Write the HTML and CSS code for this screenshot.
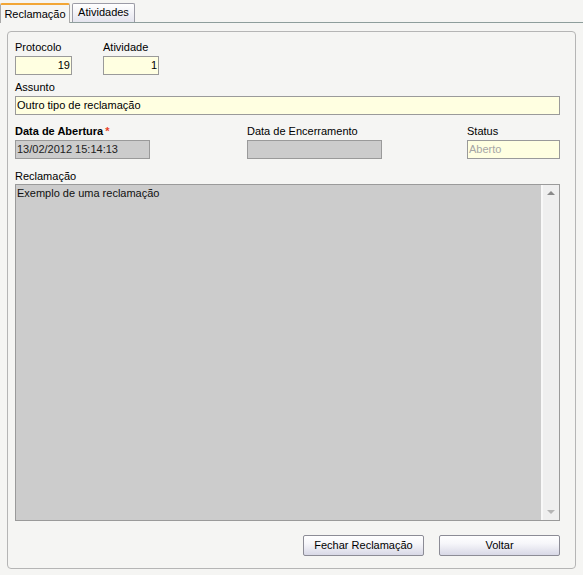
FILE: index.html
```html
<!DOCTYPE html>
<html lang="pt">
<head>
<meta charset="utf-8">
<title>Reclamação</title>
<link rel="stylesheet" href="styles.css">
</head>
<body>
<div class="tabs">
  <div class="tab tab-active">Reclamação</div>
  <div class="tab tab-idle">Atividades</div>
</div>
<div class="panel">
  <div class="row row-top">
    <div class="field f-proto">
      <div class="label">Protocolo</div>
      <div class="input yellow num">19</div>
    </div>
    <div class="field f-ativ">
      <div class="label">Atividade</div>
      <div class="input yellow num">1</div>
    </div>
  </div>
  <div class="field f-assunto">
    <div class="label">Assunto</div>
    <div class="input yellow">Outro tipo de reclamação</div>
  </div>
  <div class="row3">
    <div class="field">
      <div class="label bold">Data de Abertura<span class="req">*</span></div>
      <div class="input gray w135">13/02/2012 15:14:13</div>
    </div>
    <div class="field">
      <div class="label">Data de Encerramento</div>
      <div class="input gray w135"></div>
    </div>
    <div class="field">
      <div class="label">Status</div>
      <div class="input yellow muted">Aberto</div>
    </div>
  </div>
  <div class="field f-recl">
    <div class="label">Reclamação</div>
    <div class="textarea">
      <div class="ta-text">Exemplo de uma reclamação</div>
      <div class="scrollbar">
        <span class="arrow up"></span>
        <span class="arrow down"></span>
      </div>
    </div>
  </div>
  <div class="buttons">
    <button class="btn">Fechar Reclamação</button>
    <button class="btn">Voltar</button>
  </div>
</div>
</body>
</html>
```
FILE: styles.css
```css
html, body {
  margin: 0;
  padding: 0;
  background: #f5f5f3;
  font-family: "Liberation Sans", Arial, sans-serif;
  font-size: 11px;
  color: #000;
}
.tabs {
  display: flex;
  align-items: flex-end;
  gap: 1px;
  height: 22px;
  border-bottom: 1px solid #8e9e9c;
}
.tab {
  box-sizing: border-box;
  text-align: center;
  line-height: 15px;
  font-size: 11px;
}
.tab-active {
  width: 70px;
  height: 20px;
  border: 1px solid #a9a9a9;
  border-top: 2px solid #f2a636;
  border-bottom: none;
  border-radius: 2px 2px 0 0;
  background: #f5f5f3;
  margin-bottom: -1px;
  padding-top: 2px;
}
.tab-idle {
  width: 63px;
  height: 19px;
  margin-left: 1px;
  border: 1px solid #9b9ba6;
  border-bottom: none;
  border-radius: 2px 2px 0 0;
  background: linear-gradient(#ffffff, #e4e4ee);
  padding-top: 1px;
}
.panel {
  box-sizing: border-box;
  margin: 8px 0 0 7px;
  width: 569px;
  height: 538px;
  border: 1px solid #b5b5b5;
  border-radius: 4px;
  padding: 9px 15px 0 7px;
}
.label {
  height: 13px;
  line-height: 13px;
  margin-bottom: 2px;
  white-space: nowrap;
}
.bold { font-weight: bold; }
.req {
  color: #e8432a;
  margin-left: 2px;
  font-weight: bold;
}
.input {
  box-sizing: border-box;
  height: 19px;
  border: 1px solid #9a9a9a;
  line-height: 17px;
  padding: 0 1px;
  white-space: nowrap;
  overflow: hidden;
}
.yellow { background: #ffffe1; }
.gray { background: #cccccc; color: #222; }
.num { text-align: right; }
.muted { color: #a6a6a6; }
.w135 { width: 135px; }
.row-top {
  display: flex;
  gap: 31px;
}
.f-proto .input { width: 57px; }
.f-ativ .input { width: 56px; }
.f-assunto { margin-top: 6px; }
.row3 {
  margin-top: 10px;
  display: grid;
  grid-template-columns: 232px 220px 1fr;
}
.f-recl { margin-top: 11px; }
.f-recl .label { margin-bottom: 1px; }
.textarea {
  box-sizing: border-box;
  height: 337px;
  border: 1px solid #9a9a9a;
  background: #cccccc;
  display: flex;
}
.ta-text {
  flex: 1;
  padding: 2px 1px;
  line-height: 13px;
  color: #111;
}
.scrollbar {
  position: relative;
  width: 16px;
  background: #efefef;
  border-left: 2px solid #f8f8f8;
}
.arrow {
  position: absolute;
  left: 4px;
  width: 0;
  height: 0;
  border-left: 4px solid transparent;
  border-right: 4px solid transparent;
}
.arrow.up {
  top: 6px;
  border-bottom: 4px solid #8a8a8a;
}
.arrow.down {
  bottom: 6px;
  border-top: 4px solid #b5b5b5;
}
.buttons {
  display: flex;
  justify-content: flex-end;
  gap: 15px;
  margin-top: 14px;
}
.btn {
  box-sizing: border-box;
  width: 121px;
  height: 21px;
  border: 1px solid #8c8c96;
  border-radius: 2px;
  background: linear-gradient(#ffffff 0%, #f6f6fa 40%, #d8d8e6 100%);
  font-family: "Liberation Sans", Arial, sans-serif;
  font-size: 11px;
  color: #000;
  padding: 0;
  line-height: 19px;
}
```
